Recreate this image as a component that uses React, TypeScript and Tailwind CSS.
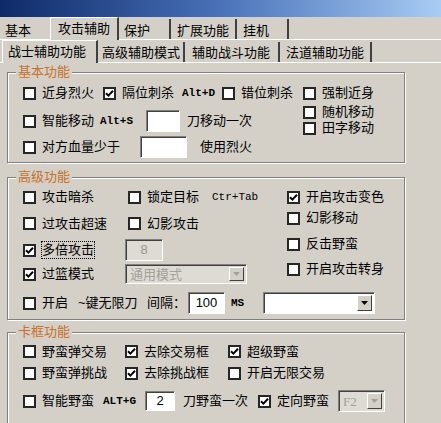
import React from 'react';

function Box({ checked }: { checked?: boolean }) {
  return (
    <span className="w-[13px] h-[13px] shrink-0 bg-white border-2 border-[#262626] flex items-center justify-center">
      {checked && (
        <svg width="9" height="9" viewBox="0 0 9 9">
          <path d="M1 4.2 L3.4 6.6 L8 1.8" stroke="#000" strokeWidth="2" fill="none" />
        </svg>
      )}
    </span>
  );
}

function Check({ label, checked, className = '', focus }: { label: React.ReactNode; checked?: boolean; className?: string; focus?: boolean }) {
  return (
    <div className={`flex items-center shrink-0 ${className}`}>
      <Box checked={checked} />
      <span className={`ml-[6px] leading-[16px] whitespace-nowrap ${focus ? 'outline outline-1 outline-dotted outline-black' : ''}`}>{label}</span>
    </div>
  );
}

function Mono({ children, className = '' }: { children: React.ReactNode; className?: string }) {
  return <span className={`font-['Liberation_Mono',monospace] text-[11px] font-bold shrink-0 ${className}`}>{children}</span>;
}

function Input({ value, className = '', disabled }: { value?: string; className?: string; disabled?: boolean }) {
  return (
    <div
      className={`shrink-0 flex items-center justify-center border border-[#808080] border-b-white border-r-white shadow-[inset_1px_1px_0_#404040] text-[13px] ${disabled ? 'bg-[#dedbd5] text-[#9a9790]' : 'bg-white'} ${className}`}
    >
      {value}
    </div>
  );
}

function Select({ value, disabled, className = '' }: { value?: string; disabled?: boolean; className?: string }) {
  return (
    <div
      className={`shrink-0 flex items-stretch border border-[#808080] border-b-white border-r-white shadow-[inset_1px_1px_0_#404040] p-[2px] ${disabled ? 'bg-[#dedbd5]' : 'bg-white'} ${className}`}
    >
      <span className={`flex-1 flex items-center pl-[2px] text-[13px] leading-none ${disabled ? 'text-[#a3a09a]' : ''}`}>{value}</span>
      <span className="w-[15px] bg-[#d4d0c8] border border-white border-r-[#404040] border-b-[#404040] flex items-center justify-center">
        <svg width="7" height="4" viewBox="0 0 7 4">
          <path d="M0 0h7L3.5 4z" fill={disabled ? '#a0a0a0' : '#000'} />
        </svg>
      </span>
    </div>
  );
}

function Group({ title, className = '', children }: { title: string; className?: string; children: React.ReactNode }) {
  return (
    <div className={`ml-[7px] w-[398px] border border-[#808080] shadow-[inset_1px_1px_0_#fff,1px_1px_0_#fff] ${className}`}>
      <div className="-mt-[9px] ml-[8px] w-fit px-[2px] bg-[#d4d0c8] leading-[16px] text-[13px] text-[#c8702a]">{title}</div>
      {children}
    </div>
  );
}

export default function App() {
  return (
    <div className="w-[441px] h-[423px] overflow-hidden bg-[#d4d0c8] text-black text-[13px] font-['Liberation_Sans','Noto_Sans_CJK_SC',sans-serif]">
      {/* title bar */}
      <div className="h-[17px] bg-gradient-to-r from-[#0f2a68] via-[#4a72b8] to-[#a9ccf3]" />

      {/* top tabs */}
      <div className="h-[23px] flex items-end border-b border-white">
        <div className="w-[50px] h-[20px] pl-[5px] pt-[3px] flex items-center">基本</div>
        <div className="w-[69px] h-[23px] -mb-[1px] bg-[#d4d0c8] border-l border-t border-white border-r-2 border-r-[#404040] flex items-center justify-center">攻击辅助</div>
        <div className="w-[52px] h-[20px] pl-[5px] pt-[3px] flex items-center border-r-2 border-[#404040]">保护</div>
        <div className="w-[66px] h-[20px] pl-[6px] pt-[3px] flex items-center border-r-2 border-[#404040]">扩展功能</div>
        <div className="w-[52px] h-[20px] pl-[6px] pt-[3px] flex items-center border-r-2 border-[#404040]">挂机</div>
      </div>

      {/* sub tabs */}
      <div className="h-[23px] flex items-end border-b border-white">
        <div className="ml-[2px] w-[96px] h-[23px] -mb-[1px] bg-[#d4d0c8] border-l border-t border-white border-r-2 border-r-[#404040] pl-[5px] flex items-center">战士辅助功能</div>
        <div className="w-[87px] h-[20px] pl-[4px] pt-[1px] flex items-center border-r-2 border-[#404040]">高级辅助模式</div>
        <div className="w-[95px] h-[20px] pl-[7px] pt-[1px] flex items-center border-r-2 border-[#404040]">辅助战斗功能</div>
        <div className="w-[92px] h-[20px] pl-[6px] pt-[1px] flex items-center border-r-2 border-[#404040]">法道辅助功能</div>
      </div>

      {/* 基本功能 */}
      <Group title="基本功能" className="mt-[9px] h-[91px]">
        <div className="flex">
          <div className="w-[295px] pl-[15px]">
            <div className="h-[26px] flex items-center">
              <Check label="近身烈火" className="w-[80px]" />
              <div className="w-[119px] flex items-center">
                <Check label="隔位刺杀" checked />
                <Mono className="ml-[8px]">Alt+D</Mono>
              </div>
              <Check label="错位刺杀" />
            </div>
            <div className="h-[30px] flex items-center">
              <Check label="智能移动" className="w-[77px]" />
              <Mono className="w-[46px]">Alt+S</Mono>
              <Input className="w-[34px] h-[22px]" />
              <span className="ml-[7px]">刀移动一次</span>
            </div>
            <div className="h-[22px] flex items-center">
              <Check label="对方血量少于" className="w-[117px]" />
              <Input className="w-[47px] h-[22px]" />
              <span className="ml-[13px]">使用烈火</span>
            </div>
          </div>
          <div className="flex flex-col">
            <Check label="强制近身" className="mt-[5px] h-[16px]" />
            <Check label="随机移动" className="mt-[3px] h-[16px]" />
            <Check label="田字移动" className="h-[16px]" />
          </div>
        </div>
      </Group>

      {/* 高级功能 */}
      <Group title="高级功能" className="mt-[14px] h-[143px]">
        <div className="flex">
          <div className="w-[279px] pl-[15px]">
            <div className="h-[24px] flex items-center">
              <Check label="攻击暗杀" className="w-[105px]" />
              <Check label="锁定目标" />
              <Mono className="ml-[13px] font-normal">Ctr+Tab</Mono>
            </div>
            <div className="h-[29px] flex items-center">
              <Check label="过攻击超速" className="w-[105px]" />
              <Check label="幻影攻击" />
            </div>
            <div className="h-[24px] flex items-center">
              <Check label="多倍攻击" checked focus className="w-[102px]" />
              <Input value="8" disabled className="w-[38px] h-[22px]" />
            </div>
            <div className="h-[24px] flex items-center">
              <Check label="过篮模式" checked className="w-[102px]" />
              <Select value="通用模式" disabled className="w-[122px] h-[20px]" />
            </div>
          </div>
          <div className="flex flex-col">
            <Check label="开启攻击变色" checked className="mt-[4px] h-[16px]" />
            <Check label="幻影移动" className="mt-[5px] h-[16px]" />
            <Check label="反击野蛮" className="mt-[10px] h-[16px]" />
            <Check label="开启攻击转身" className="mt-[9px] h-[16px]" />
          </div>
        </div>
        <div className="mt-[6px] h-[22px] pl-[15px] flex items-center">
          <Check
            label={
              <>
                开启<span className="ml-[10px]">~键无限刀</span>
              </>
            }
            className="w-[124px]"
          />
          <span className="w-[41px]">间隔：</span>
          <Input value="100" className="w-[37px] h-[22px] border-[#404040] border-b-[#404040] border-r-[#404040] shadow-[inset_1px_1px_0_#000]" />
          <Mono className="w-[38px] pl-[6px]">MS</Mono>
          <Select className="w-[112px] h-[22px]" />
        </div>
      </Group>

      {/* 卡框功能 */}
      <Group title="卡框功能" className="mt-[12px] h-[100px]">
        <div className="pl-[15px]">
          <div className="h-[23px] flex items-center">
            <Check label="野蛮弹交易" className="w-[102px]" />
            <Check label="去除交易框" checked className="w-[103px]" />
            <Check label="超级野蛮" checked />
          </div>
          <div className="h-[20px] flex items-center">
            <Check label="野蛮弹挑战" className="w-[102px]" />
            <Check label="去除挑战框" checked className="w-[103px]" />
            <Check label="开启无限交易" />
          </div>
          <div className="h-[36px] flex items-center">
            <Check label="智能野蛮" className="w-[80px]" />
            <Mono className="w-[42px]">ALT+G</Mono>
            <Input value="2" className="w-[30px] h-[20px]" />
            <span className="ml-[8px] w-[75px]">刀野蛮一次</span>
            <Check label="定向野蛮" checked className="w-[80px]" />
            <Select value="F2" disabled className="w-[47px] h-[22px] font-['Liberation_Serif',serif]" />
          </div>
        </div>
      </Group>
    </div>
  );
}
